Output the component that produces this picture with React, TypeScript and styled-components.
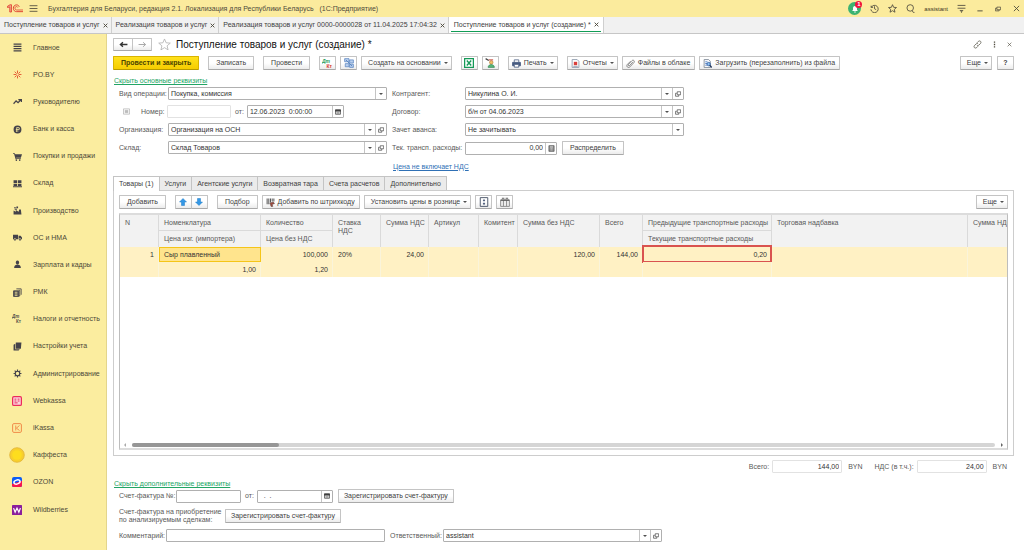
import React from 'react';
import styled, { createGlobalStyle, css } from 'styled-components';

const GlobalStyle = createGlobalStyle`
  * { box-sizing: border-box; }
  body { margin: 0; background: #fff; }
  body, button, input, select {
    font-family: "Liberation Sans", Arial, sans-serif;
    font-size: 7px;
    line-height: 8px;
    color: #404040;
  }
  svg { display: block; flex: none; }
`;

/* ---------- shell ---------- */

const Page = styled.div`
  display: flex;
  flex-direction: column;
  min-height: 100vh;
`;

const TitleBar = styled.header`
  display: flex;
  align-items: center;
  height: 17px;
  padding: 0 4px 0 7px;
  background: #fbeb9d;
`;

const AppTitle = styled.span`
  flex: 1;
  margin-left: 10px;
  white-space: pre;
  color: #4d4a3c;
`;

const BarTools = styled.div`
  display: flex;
  align-items: center;
  gap: 9px;
`;

const UserName = styled.span`
  font-size: 6px;
  color: #3b3724;
`;

const IconButton = styled.button`
  display: flex;
  align-items: center;
  justify-content: center;
  padding: 0;
  border: 0;
  background: none;
  color: #4d4a3c;
`;

const BurgerButton = styled(IconButton)`
  margin-left: 5px;
`;

const BellButton = styled(IconButton)`
  position: relative;
  width: 13px;
  height: 13px;
  border-radius: 50%;
  background: #3cb371;
`;

const Badge = styled.span`
  position: absolute;
  top: -1px;
  right: -1px;
  width: 7px;
  height: 7px;
  border-radius: 50%;
  background: #f0143c;
  color: #fff;
  font-size: 6px;
  font-weight: bold;
  line-height: 7px;
  text-align: center;
`;

const WindowButtons = styled.div`
  display: flex;
  align-items: center;
  gap: 12px;
  margin-left: 2px;
`;

const WindowTabs = styled.nav`
  display: flex;
  height: 17px;
  background: #f1f1f1;
  border-bottom: 1px solid #c6c6c6;
`;

const WindowTab = styled.div<{ $active?: boolean }>`
  display: flex;
  align-items: center;
  padding: 0 3px 0 4px;
  border-right: 1px solid #cfcfcf;
  white-space: pre;
  ${p => p.$active && css`
    padding: 0 2px;
    background: #fff;
  `}
`;

const TabLabel = styled.span<{ $active?: boolean }>`
  display: flex;
  align-items: center;
  gap: 3px;
  height: 100%;
  ${p => p.$active && css`
    height: 15px;
    padding: 1px 2px 0 3px;
    border-bottom: 1px solid #119c55;
    align-self: flex-start;
  `}
`;

const Body = styled.div`
  display: flex;
  flex: 1;
`;

const Sidebar = styled.nav`
  display: flex;
  flex: none;
  width: 107px;
  background: #fbed9f;
  border-right: 1px solid #e3d58c;
`;

const MenuList = styled.ul`
  display: flex;
  flex: 1;
  flex-direction: column;
  margin: 0;
  padding: 0 0 27px;
  list-style: none;
`;

const MenuItem = styled.li`
  display: flex;
  flex: 1;
`;

const MenuLink = styled.a`
  display: flex;
  flex: 1;
  align-items: center;
  gap: 8px;
  min-height: 20px;
  padding-left: 9px;
  color: #4b4838;
  text-decoration: none;
  white-space: nowrap;
`;

const MenuIcon = styled.span`
  display: flex;
  align-items: center;
  justify-content: center;
  width: 16px;
  height: 16px;
  color: #45434a;
`;

const Main = styled.main`
  flex: 1;
  min-width: 0;
  padding: 4px 10px 6px 6px;
`;

/* ---------- controls ---------- */

type Kind = 'primary' | 'square' | 'menu' | 'icon' | 'iconMenu' | 'tight';

const buttonPadding: Record<Kind, string> = {
  primary: '0 7px',
  square: '0',
  menu: '0 3px 0 6px',
  icon: '0 4px 0 3px',
  iconMenu: '0 3px',
  tight: '0 5px',
};

const Button = styled.button<{ $kind?: Kind }>`
  display: flex;
  flex: none;
  align-items: center;
  justify-content: center;
  gap: 3px;
  height: 14px;
  min-width: ${p => (p.$kind === 'square' ? 17 : 0)}px;
  padding: ${p => (p.$kind ? buttonPadding[p.$kind] : '0 7px')};
  border: 1px solid #c4c4c4;
  border-bottom-color: #a9a9a9;
  border-radius: 1px;
  background: linear-gradient(#fff 50%, #ececec);
  white-space: nowrap;
  ${p => p.$kind === 'primary' && css`
    border-color: #d9b400;
    border-bottom-color: #b89a00;
    background: linear-gradient(#ffe11c, #f6cd00);
    font-weight: bold;
    color: #4c4400;
  `}
`;

const ButtonPair = styled.div`
  display: flex;
  & > button + button { margin-left: -1px; }
`;

const Caret = styled.span`
  flex: none;
  border: 2px solid transparent;
  border-top-color: #505050;
  border-bottom: 0;
`;

const GreenLink = styled.a`
  color: #22a565;
  text-decoration: underline;
`;

const BlueLink = styled.a`
  margin-left: 1px;
  color: #2f70b5;
  text-decoration: underline;
`;

const HeadRow = styled.div`
  display: flex;
  align-items: center;
  height: 13px;
`;

const NavButton = styled(Button)`
  width: 20px;
  height: 13px;
  padding: 0;
`;

const Heading = styled.h1`
  flex: 1;
  margin: 0 0 0 5px;
  font-size: 10px;
  font-weight: normal;
  line-height: 12px;
  color: #111;
`;

const Star = styled(IconButton)`
  margin-left: 6px;
  color: #b0b0b0;
`;

const HeadTools = styled.div`
  display: flex;
  align-items: center;
  gap: 9px;
  padding-right: 2px;
`;

const Toolbar = styled.div`
  display: flex;
  align-items: center;
  gap: 9px;
  margin-top: 5px;
`;

const Group = styled.div`
  display: flex;
  align-items: center;
  gap: 4px;
`;

const Push = styled.div`
  display: flex;
  gap: 5px;
  margin-left: auto;
`;

const LinkLine = styled.div`
  margin-top: 7px;
  padding-left: 1px;
  height: 8px;
`;

const FormColumns = styled.div`
  display: flex;
  gap: 5px;
  margin-top: 2px;
  padding-left: 6px;
`;

const FormColumn = styled.div<{ $width: number }>`
  display: flex;
  flex-direction: column;
  gap: 5px;
  width: ${p => p.$width}px;
`;

const FieldRow = styled.div`
  display: flex;
  align-items: center;
  min-height: 13px;
`;

const Label = styled.label<{ $width?: number; $gap?: number; $left?: number }>`
  flex: none;
  width: ${p => (p.$width ? p.$width + 'px' : 'auto')};
  margin-right: ${p => p.$gap ?? 0}px;
  margin-left: ${p => p.$left ?? 0}px;
  color: #595959;
  white-space: nowrap;
`;

const NumberSlot = styled.span`
  margin: 0 11px 0 4px;
`;

const Spacer = styled.span`
  width: 5px;
`;

const Box = styled.div<{ $width?: number; $soft?: boolean }>`
  display: flex;
  flex: ${p => (p.$width ? 'none' : '1')};
  width: ${p => (p.$width ? p.$width + 'px' : 'auto')};
  height: 13px;
  border: 1px solid ${p => (p.$soft ? '#e2e2e2' : '#b0b0b0')};
  border-radius: 1px;
  background: #fff;
`;

const controlText = css`
  flex: 1;
  min-width: 0;
  width: 100%;
  padding: 0 2px;
  border: 0;
  background: transparent;
  outline: none;
  color: #333;
`;

const Input = styled.input<{ $right?: boolean }>`
  ${controlText}
  text-align: ${p => (p.$right ? 'right' : 'left')};
`;

const Select = styled.select`
  ${controlText}
  appearance: none;
`;

const EndCell = styled.span`
  display: flex;
  flex: none;
  align-items: center;
  justify-content: center;
  width: 11px;
  border-left: 1px solid #c4c4c4;
`;

const EndButton = styled(EndCell).attrs({ as: 'button' })`
  padding: 0;
  border-width: 0 0 0 1px;
  background: none;
`;

/* ---------- tab pane and table ---------- */

const PaneTabs = styled.div`
  display: flex;
  margin-top: 3px;
`;

const PaneTab = styled.button<{ $active?: boolean }>`
  position: relative;
  z-index: ${p => (p.$active ? 1 : 0)};
  height: ${p => (p.$active ? 15 : 14)}px;
  margin-bottom: ${p => (p.$active ? -1 : 0)}px;
  padding: 0 5px;
  border: 1px solid #c4c4c4;
  border-left-width: ${p => (p.$active ? 1 : 0)}px;
  border-bottom: 0;
  background: ${p => (p.$active ? '#fff' : '#ebebeb')};
  white-space: nowrap;
`;

const Pane = styled.section`
  padding: 4px 5px 5px;
  border: 1px solid #cdcdcd;
`;

const PaneTools = styled.div`
  display: flex;
  align-items: center;
  gap: 9px;
`;

const Grid = styled.div`
  display: flex;
  flex-direction: column;
  height: 237px;
  margin-top: 4px;
  border: 1px solid #bdbdbd;
  border-top: 2px solid #dcdcdc;
  border-bottom: 2px solid #dcdcdc;
  overflow: hidden;
`;

const TableClip = styled.div`
  flex: 1;
  overflow: hidden;
`;

const Table = styled.table`
  width: 100%;
  min-width: 929px;
  table-layout: fixed;
  border-collapse: separate;
  border-spacing: 0;
`;

const Th = styled.th<{ $line?: boolean }>`
  height: 16px;
  padding: 4px 3px 0 5px;
  border-right: 1px solid #dadada;
  border-bottom: ${p => (p.$line ? '1px solid #dadada' : '0')};
  background: #f2f2f2;
  color: #595959;
  font-weight: normal;
  text-align: left;
  vertical-align: top;
  white-space: nowrap;
`;

const Td = styled.td<{ $right?: boolean; $current?: boolean }>`
  position: relative;
  height: 15px;
  padding: 4px 4px 0 5px;
  border-right: 1px solid #faf4da;
  background: #fff1c4;
  color: #333;
  text-align: ${p => (p.$right ? 'right' : 'left')};
  vertical-align: top;
  white-space: nowrap;
  ${p => p.$current && css`
    padding: 3px 3px 0 4px;
    border: 1px solid #f5c518;
    background: #ffe48d;
  `}
`;

const RedFrame = styled.span`
  position: absolute;
  inset: -2px -1px -1px -1px;
  border: 2px solid #d9534f;
`;

const ScrollRow = styled.div`
  display: flex;
  align-items: center;
  gap: 6px;
  height: 7px;
  padding: 0 4px;
`;

const Track = styled.div`
  flex: 1;
  height: 4px;
  border-radius: 2px;
  background: #d5d5d5;
`;

const Thumb = styled.div`
  width: 17%;
  height: 4px;
  border-radius: 2px;
  background: #969696;
`;

const Arrow = styled.span<{ $back?: boolean }>`
  border: 2px solid transparent;
  border-left: ${p => (p.$back ? '0' : '2px solid #666')};
  border-right: ${p => (p.$back ? '2px solid #aaa' : '0')};
`;

const Totals = styled.div`
  display: flex;
  align-items: center;
  justify-content: flex-end;
  margin-top: 4px;
  padding-right: 7px;
  color: #595959;
`;

const Unit = styled.span`
  margin-left: 6px;
`;

const Extra = styled.div`
  display: flex;
  flex-direction: column;
  gap: 5px;
  padding: 1px 0 0 6px;
`;

/* ---------- icons ---------- */

type IconProps = { size?: number; children: React.ReactNode; box?: number };
const Svg = ({ size = 9, box = 16, children }: IconProps) => (
  <svg width={size} height={size} viewBox={`0 0 ${box} ${box}`} fill="none" stroke="currentColor" strokeWidth="1.5" aria-hidden="true">
    {children}
  </svg>
);

const Solid = ({ d, size = 9 }: { d: string; size?: number }) => (
  <Svg size={size}><path d={d} fill="currentColor" stroke="none" fillRule="evenodd" /></Svg>
);

const Logo = () => (
  <svg width="17" height="9" viewBox="0 0 34 18" fill="none" stroke="#dc3328" aria-hidden="true">
    <path d="M1 7V4.500L6 1.500h3V16H5.500V6z" strokeWidth="1.500" fill="#f3a583" />
    <path d="M24.500 5.500C23.500 3 21.500 1.800 19 1.800c-3.800 0-6.300 2.900-6.300 6.700 0 4.200 2.800 6.800 6.500 6.800H32" strokeWidth="1.800" />
    <path d="M21.500 7c-.5-1.300-1.300-1.900-2.500-1.900-1.800 0-3 1.400-3 3.400 0 2.200 1.400 3.500 3.200 3.500H32" strokeWidth="1.500" />
  </svg>
);

const BurgerIcon = () => <Svg size={9}><path d="M1 3h14M1 8h14M1 13h14" /></Svg>;
const CloseIcon = ({ size = 5, w = 3 }) => <Svg size={size}><path d="M2 2l12 12M14 2L2 14" strokeWidth={w} /></Svg>;
const StarIcon = ({ size = 9, w = 1.5 }) => (
  <Svg size={size}><path d="M8 1.200l2 4.700 5.100.4-3.900 3.300 1.200 5L8 11.900l-4.400 2.700 1.200-5L.9 6.300 6 5.900z" strokeWidth={w} /></Svg>
);
const OpenIcon = () => <Svg size={6}><path d="M6 2h9v8H6zM5 6H1.500v8H10v-3.500" strokeWidth="1.800" /></Svg>;
const CalendarIcon = () => <Svg size={6}><path d="M1.500 3h13v11h-13z" strokeWidth="2" /><path d="M1 2h14v4H1z" fill="currentColor" /><path d="M4 9h8M4 11.500h8" strokeWidth="1.200" /></Svg>;
const CalcIcon = () => <Svg size={7}><path d="M2 1.500h12v13H2z" fill="#777" stroke="#555" /><path d="M4 4.500h8" stroke="#fff" strokeWidth="2" /><path d="M4 8.500h8M4 11.500h8" stroke="#fff" strokeDasharray="2 1" /></Svg>;
const DtKt = ({ a, b, size = 11 }: { a: string; b: string; size?: number }) => (
  <svg width={size} height={size} viewBox="0 0 22 22" fontFamily="Liberation Sans, sans-serif" fontSize="10" fontWeight="bold" aria-hidden="true">
    <text x="0" y="9" fill={a} fontStyle="italic">Дт</text>
    <text x="9" y="20" fill={b}>Кт</text>
  </svg>
);
const StructureIcon = () => (
  <Svg size={10}><path d="M1 1h7v5H1zM9 3h6v5H9zM2 9h6v5H2zM9 10h6v5H9z" fill="#b9d0ef" stroke="#5b86c0" strokeWidth="1.200" /><path d="M3 3l10 10" stroke="#5b86c0" /></Svg>
);
const ExcelIcon = () => (
  <Svg size={10}><path d="M1 1h14v14H1z" fill="#fff" stroke="#159957" strokeWidth="2" /><path d="M4.500 4l7 8M11.500 4l-7 8" stroke="#159957" strokeWidth="2.200" /></Svg>
);
const PersonClipIcon = () => (
  <Svg size={10}><path d="M1 1l5 3" stroke="#444" strokeWidth="2" /><circle cx="10" cy="7" r="2.800" fill="#efc06a" stroke="#b5772d" strokeWidth="1" /><path d="M5 15c0-6 10-6 10 0z" fill="#58b87c" stroke="#2f7d4c" strokeWidth="1" /><path d="M6 3h7" stroke="#c0392b" strokeWidth="1.500" /></Svg>
);
const PrinterIcon = () => (
  <Svg size={9}><path d="M4 6V1.500h8V6" stroke="#56688a" /><path d="M1 6h14v6H1z" fill="#465a80" stroke="#465a80" /><path d="M4 9.500h8v5H4z" fill="#fff" stroke="#465a80" /></Svg>
);
const ReportIcon = () => (
  <Svg size={9}><path d="M2 1h9l3 3v11H2z" fill="#fff" stroke="#8a97a8" /><path d="M5 5h6v6H5z" fill="#d9403c" stroke="none" /><path d="M4 13h8" stroke="#8a97a8" /></Svg>
);
const ClipIcon = () => <Svg size={9}><path d="M12.500 5l-6 6.500c-1.500 1.500-3.500-.3-2-2l6-6.500c2.500-2.500 6 .8 3.500 3.500l-7 7.500c-3 3-7.500-.8-4.500-4.500L8 4" stroke="#666" strokeWidth="1.300" /></Svg>;
const LoadIcon = () => (
  <Svg size={9}><path d="M2 1h8l3 3v11H2z" fill="#fff" stroke="#7b8794" /><path d="M4 5h4M4 8h3M4 11h3" stroke="#3f74c0" /><circle cx="10" cy="9" r="3" fill="#8fc1f0" stroke="#2c5aa0" /><path d="M12 11l3.500 4" stroke="#2c3e60" strokeWidth="2.500" /></Svg>
);
const BlueArrow = ({ down }: { down?: boolean }) => (
  <Svg size={8}><path d={down ? 'M8 15L1 8h4V1h6v7h4z' : 'M8 1l7 7h-4v7H5V8H1z'} fill="#3498e6" stroke="#1d78c4" strokeWidth="1" /></Svg>
);
const ScannerIcon = () => (
  <Svg size={9}><path d="M2 1v10M5 1v10M8 1v7M11 1v5M14 1v5" stroke="#555" strokeWidth="1.800" /><path d="M7 9l6-2 2 3-4 1 1 4H9z" fill="#a34a3c" stroke="#5c4a48" strokeWidth="1" /></Svg>
);
const ExpandIcon = () => (
  <Svg size={10}><path d="M2 1h12v14H2z" stroke="#4a5468" /><path d="M8 3l2 3H6zM8 13l2-3H6z" fill="#36486a" stroke="none" /><path d="M8 5v6" stroke="#36486a" strokeDasharray="2 2" /></Svg>
);
const ColumnsIcon = () => (
  <Svg size={10}><path d="M1 5h14v10H1z" fill="#eee" stroke="#8a8a8a" /><path d="M5.500 5v10M10.500 5v10" stroke="#8a8a8a" /><path d="M1 5h14" stroke="#555" strokeWidth="2" /><path d="M3 2h4M9 2h4" stroke="#555" /></Svg>
);
const NavArrow = ({ back, color }: { back?: boolean; color: string }) => (
  <Svg size={9}><path d={back ? 'M15 8H3M7 4L2.500 8 7 12' : 'M1 8h12M9 4l4.500 4L9 12'} stroke={color} strokeWidth={back ? 2.4 : 1.5} /></Svg>
);
const HistoryIcon = () => <Svg size={9}><path d="M2 3v3h3.500M2.200 6a6.500 6.500 0 1 1-.6 3.500M8 4v4.500l3 1.500" /></Svg>;
const SearchIcon = () => <Svg size={9}><circle cx="7.500" cy="7" r="5.800" /><path d="M11 12l2 3h2" /></Svg>;
const SettingsLines = () => <Svg size={9}><path d="M1 2.500h14M1 7.500h14M5 11.500h6" /><path d="M6 13h4l-2 3z" fill="currentColor" stroke="none" /></Svg>;
const LinkIcon = () => <Svg size={9}><path d="M7 5l2.500-2.500c3-2.500 6 1 4 3.500L10.500 9c-1 1-2.500 1-3.500.3M9 11l-2.500 2.500c-3 2.500-6-1-4-3.500L5.500 7C6.500 6 8 6 9 6.700" strokeWidth="1.300" /></Svg>;
const DotsIcon = () => <Svg size={7}><path d="M8 1v3M8 6.500v3M8 12v3" strokeWidth="3" /></Svg>;
const NumberIcon = () => <Svg size={7}><path d="M1 2h14v12H1z" stroke="#aaa" /><path d="M4 5.500h8M4 8h8M4 10.500h8" stroke="#999" /></Svg>;

const GearIcon = () => (
  <Svg><circle cx="8" cy="8" r="4" strokeWidth="2" /><path d="M8 1v3M8 12v3M1 8h3M12 8h3M3 3l2 2M11 11l2 2M13 3l-2 2M5 11l-2 2" strokeWidth="2" /></Svg>
);
const AsteriskIcon = () => (
  <Svg><g stroke="#e2502c" strokeWidth="1.600"><path d="M8 1v5M8 10v5M1 8h5M10 8h5M3 3l3.500 3.500M9.500 9.500L13 13M13 3L9.500 6.500M6.500 9.500L3 13" /></g></Svg>
);
const WebkassaIcon = () => (
  <Svg size={10}><rect x="1" y="1" width="14" height="14" rx="2" fill="#fbd3dc" stroke="#ec2b5b" strokeWidth="2" /><path d="M4 5h3M9 5h3M4 8h3M9 8h3M4 11h5" stroke="#ec2b5b" strokeWidth="1.600" /></Svg>
);
const IKassaIcon = () => (
  <Svg size={10}><rect x="1" y="1" width="14" height="14" rx="2" stroke="#f08a48" strokeWidth="1.600" /><path d="M6 4v8M12 4L7 8.200 12 12" stroke="#f08a48" strokeWidth="1.500" /></Svg>
);
const SunIcon = () => (
  <Svg size={16}><circle cx="8" cy="8" r="7.300" fill="#f8cf2c" stroke="#e0b33a" strokeWidth="0.800" /><circle cx="8" cy="8" r="4.800" fill="#fedd1e" stroke="none" /></Svg>
);
const OzonIcon = () => (
  <Svg size={10}><rect width="16" height="16" rx="3" fill="#0b5cf5" stroke="none" /><path d="M0 11l16-5v7a3 3 0 0 1-3 3H3a3 3 0 0 1-3-3z" fill="#f5164f" stroke="none" /><ellipse cx="8" cy="8" rx="5" ry="3.200" transform="rotate(-18 8 8)" stroke="#fff" strokeWidth="2.400" /></Svg>
);
const WildberriesIcon = () => (
  <Svg size={10}><rect width="16" height="16" rx="1" fill="#8a1f9c" stroke="none" /><path d="M2.500 5l2.500 6.500L8 5l3 6.500L13.500 5" stroke="#fff" strokeWidth="1.900" /></Svg>
);

const menu: { label: string; icon: React.ReactNode }[] = [
  { label: 'Главное', icon: <Svg><path d="M1 2h14M1 6h14M1 10h14M1 14h14" strokeWidth="2" /></Svg> },
  { label: 'PO.BY', icon: <AsteriskIcon /> },
  { label: 'Руководителю', icon: <Svg><path d="M1 12l4.500-5 3.500 3 5-5M9.500 4.500H15V9" strokeWidth="2.200" /></Svg> },
  { label: 'Банк и касса', icon: <Solid d="M8 1a7 7 0 1 0 0 14A7 7 0 0 0 8 1zM6 4h3.500a2.500 2.500 0 0 1 0 5H7.500v1H10v1H7.500v1.500H6V11H5v-1h1V9H5V7.500h1zm1.500 1.500v2h2a1 1 0 0 0 0-2z" /> },
  { label: 'Покупки и продажи', icon: <Solid d="M0 2h3l1 2h12l-2 6H5.500l.3 1H14v1.500H4.500L2 3.500H0zM6 13a1.400 1.400 0 1 1-.1 0zM12 13a1.400 1.400 0 1 1-.1 0z" /> },
  { label: 'Склад', icon: <Solid d="M1 2h6.300v5H1zM8.700 2H15v5H8.700zM1 8.300h6.300v4H1zM8.700 8.300H15v4H8.700zM0 13h16v1.500H0z" /> },
  { label: 'Производство', icon: <Solid d="M1 15V8l4 2V7l5 3 1-4h3l1 9zM2 2h3v2H2zM6 1h3v3H6zM3 5h4v1.500H3z" /> },
  { label: 'ОС и НМА', icon: <Solid d="M0 3h9v8H0zM10 5h3.500L16 8v3h-6zM3.500 9.500a2 2 0 1 1-.1 0zM12.500 9.500a2 2 0 1 1-.1 0z" /> },
  { label: 'Зарплата и кадры', icon: <Solid d="M8 1a3 3.500 0 1 1-.1 0zM2 14c0-4 2.500-5 4.500-5.500h3C11.500 9 14 10 14 14z" /> },
  { label: 'РМК', icon: <Svg><path d="M6 1.500h8.500V12" /><path d="M1 5h9v10H1z" fill="currentColor" /><path d="M3 7.500h5M3 10.500h5M3 13h5" stroke="#fbed9f" /><path d="M10 4h2v10h-2" /></Svg> },
  { label: 'Налоги и отчетность', icon: <DtKt a="#55524a" b="#55524a" size={10} /> },
  { label: 'Настройки учета', icon: <Solid d="M1 5l3-2v10h8l-2 2H1zM5 1h10l-1 11H5z" /> },
  { label: 'Администрирование', icon: <GearIcon /> },
  { label: 'Webkassa', icon: <WebkassaIcon /> },
  { label: 'iKassa', icon: <IKassaIcon /> },
  { label: 'Каффеста', icon: <SunIcon /> },
  { label: 'OZON', icon: <OzonIcon /> },
  { label: 'Wildberries', icon: <WildberriesIcon /> },
];

const windowTabs = [
  { label: 'Поступление товаров и услуг' },
  { label: 'Реализация товаров и услуг' },
  { label: 'Реализация товаров и услуг 0000-0000028 от 11.04.2025 17:04:32' },
  { label: 'Поступление товаров и услуг (создание) *', active: true },
];

const paneTabs = ['Товары (1)', 'Услуги', 'Агентские услуги', 'Возвратная тара', 'Счета расчетов', 'Дополнительно'];
const columnWidths = [39, 102, 72, 48, 48, 50, 39, 82, 43, 129, 196];

/* ---------- composed fields ---------- */

const Choice = ({ id, value, width, open }: { id: string; value: string; width?: number; open?: boolean }) => (
  <Box $width={width}>
    <Select id={id} defaultValue={value}><option>{value}</option></Select>
    <EndCell><Caret /></EndCell>
    {open && <EndButton aria-label="Открыть"><OpenIcon /></EndButton>}
  </Box>
);

const DateField = ({ id, value, width }: { id: string; value: string; width: number }) => (
  <Box $width={width}>
    <Input id={id} defaultValue={value} />
    <EndButton aria-label="Календарь"><CalendarIcon /></EndButton>
  </Box>
);

export default function App() {
  return (
    <Page>
      <GlobalStyle />
      <TitleBar>
        <Logo />
        <BurgerButton aria-label="Меню"><BurgerIcon /></BurgerButton>
        <AppTitle>{'Бухгалтерия для Беларуси, редакция 2.1. Локализация для Республики Беларусь   (1С:Предприятие)'}</AppTitle>
        <BarTools>
          <BellButton aria-label="Уведомления">
            <Svg size={8}><path d="M8 2c-3 0-4 2.500-4 5v3l-2 2h12l-2-2V7c0-2.500-1-5-4-5zM6.500 13h3v2h-3z" fill="#fff" stroke="none" /></Svg>
            <Badge>1</Badge>
          </BellButton>
          <IconButton aria-label="История"><HistoryIcon /></IconButton>
          <IconButton aria-label="Избранное"><StarIcon /></IconButton>
          <IconButton aria-label="Поиск"><SearchIcon /></IconButton>
          <UserName>assistant</UserName>
          <IconButton aria-label="Настройки"><SettingsLines /></IconButton>
          <WindowButtons>
            <IconButton aria-label="Свернуть"><Svg size={6}><path d="M1 13h14" strokeWidth="2.500" /></Svg></IconButton>
            <IconButton aria-label="Восстановить"><Svg size={6}><path d="M5 3h10v7H5zM5 6H1v7h10v-3" strokeWidth="2" /></Svg></IconButton>
            <IconButton aria-label="Закрыть"><CloseIcon size={7} w={2} /></IconButton>
          </WindowButtons>
        </BarTools>
      </TitleBar>

      <WindowTabs>
        {windowTabs.map(t => (
          <WindowTab key={t.label} $active={t.active}>
            <TabLabel $active={t.active}>
              {t.label}
              <IconButton aria-label="Закрыть вкладку"><CloseIcon /></IconButton>
            </TabLabel>
          </WindowTab>
        ))}
      </WindowTabs>

      <Body>
        <Sidebar>
          <MenuList>
            {menu.map(m => (
              <MenuItem key={m.label}>
                <MenuLink href="#"><MenuIcon>{m.icon}</MenuIcon>{m.label}</MenuLink>
              </MenuItem>
            ))}
          </MenuList>
        </Sidebar>

        <Main>
          <HeadRow>
            <ButtonPair>
              <NavButton aria-label="Назад"><NavArrow back color="#333" /></NavButton>
              <NavButton aria-label="Вперед"><NavArrow color="#999" /></NavButton>
            </ButtonPair>
            <Star aria-label="В избранное"><StarIcon size={13} w={1} /></Star>
            <Heading>Поступление товаров и услуг (создание) *</Heading>
            <HeadTools>
              <IconButton aria-label="Ссылка"><LinkIcon /></IconButton>
              <IconButton aria-label="Еще"><DotsIcon /></IconButton>
              <IconButton aria-label="Закрыть"><CloseIcon size={5} w={2} /></IconButton>
            </HeadTools>
          </HeadRow>

          <Toolbar>
            <Button $kind="primary">Провести и закрыть</Button>
            <Button>Записать</Button>
            <Button>Провести</Button>
            <Group>
              <Button $kind="square" aria-label="Дт Кт"><DtKt a="#2c9c5c" b="#d8392b" /></Button>
              <Button $kind="square" aria-label="Структура"><StructureIcon /></Button>
              <Button $kind="menu">Создать на основании<Caret /></Button>
            </Group>
            <Group>
              <Button $kind="square" aria-label="Excel"><ExcelIcon /></Button>
              <Button $kind="square" aria-label="Контакт"><PersonClipIcon /></Button>
            </Group>
            <Button $kind="iconMenu"><PrinterIcon />Печать<Caret /></Button>
            <Group>
              <Button $kind="iconMenu"><ReportIcon />Отчеты<Caret /></Button>
              <Button $kind="icon"><ClipIcon />Файлы в облаке</Button>
              <Button $kind="icon"><LoadIcon />Загрузить (перезаполнить) из файла</Button>
            </Group>
            <Push>
              <Button $kind="menu">Еще<Caret /></Button>
              <Button $kind="square"><b>?</b></Button>
            </Push>
          </Toolbar>

          <LinkLine><GreenLink href="#">Скрыть основные реквизиты</GreenLink></LinkLine>

          <FormColumns>
            <FormColumn $width={268}>
              <FieldRow>
                <Label htmlFor="operation" $width={49}>Вид операции:</Label>
                <Choice id="operation" value="Покупка, комиссия" />
              </FieldRow>
              <FieldRow>
                <NumberSlot><NumberIcon /></NumberSlot>
                <Label htmlFor="number" $width={26}>Номер:</Label>
                <Box $width={64} $soft><Input id="number" /></Box>
                <Label htmlFor="date" $left={4} $gap={3}>от:</Label>
                <DateField id="date" value="12.06.2023  0:00:00" width={97} />
              </FieldRow>
              <FieldRow>
                <Label htmlFor="org" $width={49}>Организация:</Label>
                <Choice id="org" value="Организация на ОСН" open />
              </FieldRow>
              <FieldRow>
                <Label htmlFor="store" $width={49}>Склад:</Label>
                <Choice id="store" value="Склад Товаров" open />
              </FieldRow>
            </FormColumn>
            <FormColumn $width={292}>
              <FieldRow>
                <Label htmlFor="partner" $width={73}>Контрагент:</Label>
                <Choice id="partner" value="Никулина О. И." open />
              </FieldRow>
              <FieldRow>
                <Label htmlFor="contract" $width={73}>Договор:</Label>
                <Choice id="contract" value="б/н от 04.06.2023" open />
              </FieldRow>
              <FieldRow>
                <Label htmlFor="advance" $width={73}>Зачет аванса:</Label>
                <Choice id="advance" value="Не зачитывать" />
              </FieldRow>
              <FieldRow>
                <Label htmlFor="transport" $width={73}>Тек. трансп. расходы:</Label>
                <Box $width={92}>
                  <Input id="transport" defaultValue="0,00" $right />
                  <EndButton aria-label="Калькулятор"><CalcIcon /></EndButton>
                </Box>
                <Spacer />
                <Button>Распределить</Button>
              </FieldRow>
              <FieldRow><BlueLink href="#">Цена не включает НДС</BlueLink></FieldRow>
            </FormColumn>
          </FormColumns>

          <PaneTabs role="tablist">
            {paneTabs.map((t, i) => <PaneTab key={t} role="tab" $active={i === 0}>{t}</PaneTab>)}
          </PaneTabs>
          <Pane>
            <PaneTools>
              <Button>Добавить</Button>
              <ButtonPair>
                <Button $kind="square" aria-label="Вверх"><BlueArrow /></Button>
                <Button $kind="square" aria-label="Вниз"><BlueArrow down /></Button>
              </ButtonPair>
              <Group>
                <Button>Подбор</Button>
                <Button $kind="icon"><ScannerIcon />Добавить по штрихкоду</Button>
                <Button $kind="menu">Установить цены в рознице<Caret /></Button>
                <Button $kind="square" aria-label="Развернуть"><ExpandIcon /></Button>
                <Button $kind="square" aria-label="Колонки"><ColumnsIcon /></Button>
              </Group>
              <Push><Button $kind="menu">Еще<Caret /></Button></Push>
            </PaneTools>

            <Grid>
              <TableClip>
                <Table>
                  <colgroup>
                    {columnWidths.map((w, i) => <col key={i} width={w} />)}
                    <col />
                  </colgroup>
                  <thead>
                    <tr>
                      <Th rowSpan={2}>N</Th>
                      <Th $line>Номенклатура</Th>
                      <Th $line>Количество</Th>
                      <Th rowSpan={2}>Ставка<br />НДС</Th>
                      <Th rowSpan={2}>Сумма НДС</Th>
                      <Th rowSpan={2}>Артикул</Th>
                      <Th rowSpan={2}>Комитент</Th>
                      <Th rowSpan={2}>Сумма без НДС</Th>
                      <Th rowSpan={2}>Всего</Th>
                      <Th $line>Предыдущие транспортные расходы</Th>
                      <Th rowSpan={2}>Торговая надбавка</Th>
                      <Th rowSpan={2}>Сумма НДС</Th>
                    </tr>
                    <tr>
                      <Th>Цена изг. (импортера)</Th>
                      <Th>Цена без НДС</Th>
                      <Th>Текущие транспортные расходы</Th>
                    </tr>
                  </thead>
                  <tbody>
                    <tr>
                      <Td rowSpan={2} $right>1</Td>
                      <Td $current>Сыр плавленный</Td>
                      <Td $right>100,000</Td>
                      <Td rowSpan={2}>20%</Td>
                      <Td rowSpan={2} $right>24,00</Td>
                      <Td rowSpan={2} />
                      <Td rowSpan={2} />
                      <Td rowSpan={2} $right>120,00</Td>
                      <Td rowSpan={2} $right>144,00</Td>
                      <Td $right>0,20<RedFrame /></Td>
                      <Td rowSpan={2} />
                      <Td rowSpan={2} />
                    </tr>
                    <tr>
                      <Td $right>1,00</Td>
                      <Td $right>1,20</Td>
                      <Td />
                    </tr>
                  </tbody>
                </Table>
              </TableClip>
              <ScrollRow>
                <Arrow $back />
                <Track><Thumb /></Track>
                <Arrow />
              </ScrollRow>
            </Grid>
          </Pane>

          <Totals>
            <Label htmlFor="total" $gap={3}>Всего:</Label>
            <Box $width={70} $soft><Input id="total" defaultValue="144,00" $right readOnly /></Box>
            <Unit>BYN</Unit>
            <Label htmlFor="vat" $left={12} $gap={3}>НДС (в т.ч.):</Label>
            <Box $width={70} $soft><Input id="vat" defaultValue="24,00" $right readOnly /></Box>
            <Unit>BYN</Unit>
          </Totals>

          <LinkLine><GreenLink href="#">Скрыть дополнительные реквизиты</GreenLink></LinkLine>
          <Extra>
            <FieldRow>
              <Label htmlFor="invoice" $width={57}>Счет-фактура №:</Label>
              <Box $width={65}><Input id="invoice" /></Box>
              <Label htmlFor="invoiceDate" $left={4} $gap={3}>от:</Label>
              <DateField id="invoiceDate" value="  .  ." width={76} />
              <Spacer />
              <Button $kind="tight">Зарегистрировать счет-фактуру</Button>
            </FieldRow>
            <FieldRow>
              <Label as="span" $width={106}>Счет-фактура на приобретение<br />по анализируемым сделкам:</Label>
              <Button $kind="tight">Зарегистрировать счет-фактуру</Button>
            </FieldRow>
            <FieldRow>
              <Label htmlFor="comment" $width={47}>Комментарий:</Label>
              <Box $width={219}><Input id="comment" /></Box>
              <Label htmlFor="owner" $left={5} $width={53}>Ответственный:</Label>
              <Choice id="owner" value="assistant" width={219} open />
            </FieldRow>
          </Extra>
        </Main>
      </Body>
    </Page>
  );
}
